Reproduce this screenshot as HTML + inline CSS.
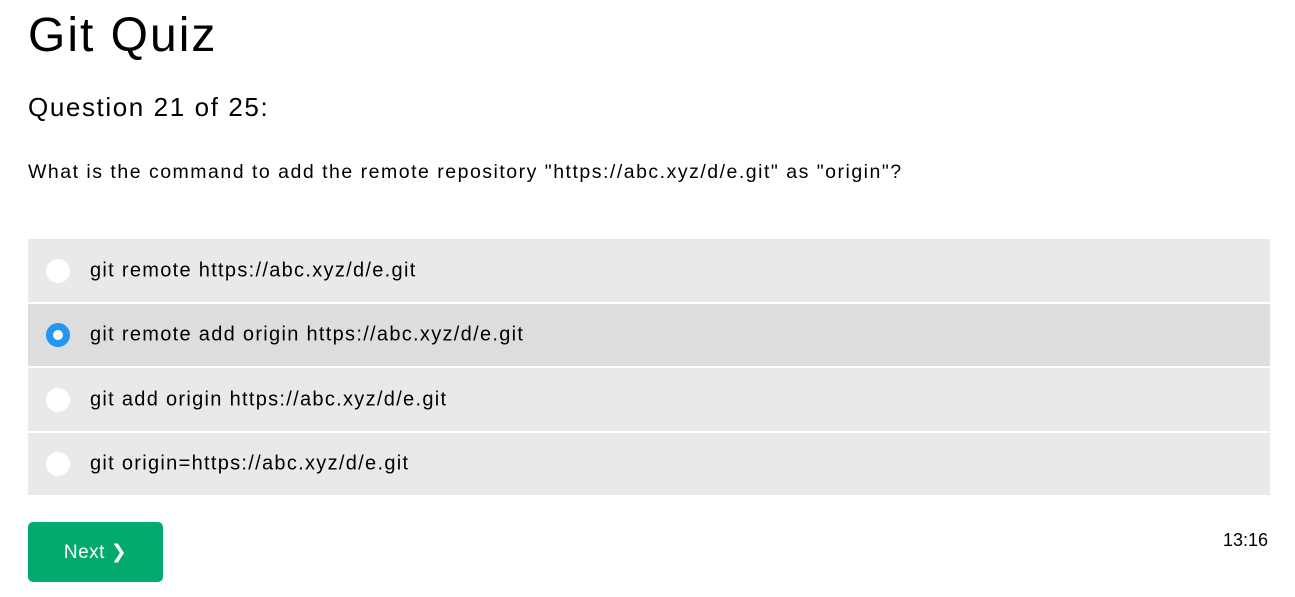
<!DOCTYPE html>
<html><head><style>
body{margin:0;background:#fff;font-family:"Liberation Sans","DejaVu Sans",sans-serif;color:#000;width:1295px;height:597px;overflow:hidden;position:relative}
h1{position:absolute;left:28px;top:6px;margin:0;font-size:48px;font-weight:normal;line-height:60px;letter-spacing:2px}
h2{position:absolute;left:28px;top:90px;margin:0;font-size:26px;font-weight:normal;line-height:34px;letter-spacing:1.6px}
.q{position:absolute;left:28px;top:159px;font-size:19.5px;line-height:26px;letter-spacing:1.5px}
.row{position:absolute;left:28px;width:1242px;background:#e8e9eb;font-size:20px;letter-spacing:1.3px}
.row.sel{background:#dddddd}
.row span{position:absolute;left:62px;top:50%;transform:translateY(-50%);white-space:nowrap}
.r{position:absolute;left:18px;top:50%;margin-top:-12px;width:24px;height:24px;border-radius:50%;background:#fff;box-sizing:border-box}
.sel .r{background:#fff;border:7px solid #2196f3}
.btn{position:absolute;left:28px;top:522px;width:135px;height:60px;background:#04aa6d;border-radius:5px;color:#fff;font-size:19px;line-height:62px;text-align:center;letter-spacing:0.5px}
.t{position:absolute;right:27px;top:529px;font-size:18px;line-height:22px}
</style></head><body>
<h1>Git Quiz</h1>
<h2>Question 21 of 25:</h2>
<div class="q">What is the command to add the remote repository "https://abc.xyz/d/e.git" as "origin"?</div>
<div class="row" style="top:239px;height:63px"><div class="r"></div><span>git remote https://abc.xyz/d/e.git</span></div>
<div class="row sel" style="top:304px;height:62px"><div class="r"></div><span>git remote add origin https://abc.xyz/d/e.git</span></div>
<div class="row" style="top:368px;height:63px"><div class="r"></div><span>git add origin https://abc.xyz/d/e.git</span></div>
<div class="row" style="top:433px;height:62px"><div class="r"></div><span>git origin=https://abc.xyz/d/e.git</span></div>
<div class="btn">Next <b>&#x276F;</b></div>
<div class="t">13:16</div>
</body></html>
